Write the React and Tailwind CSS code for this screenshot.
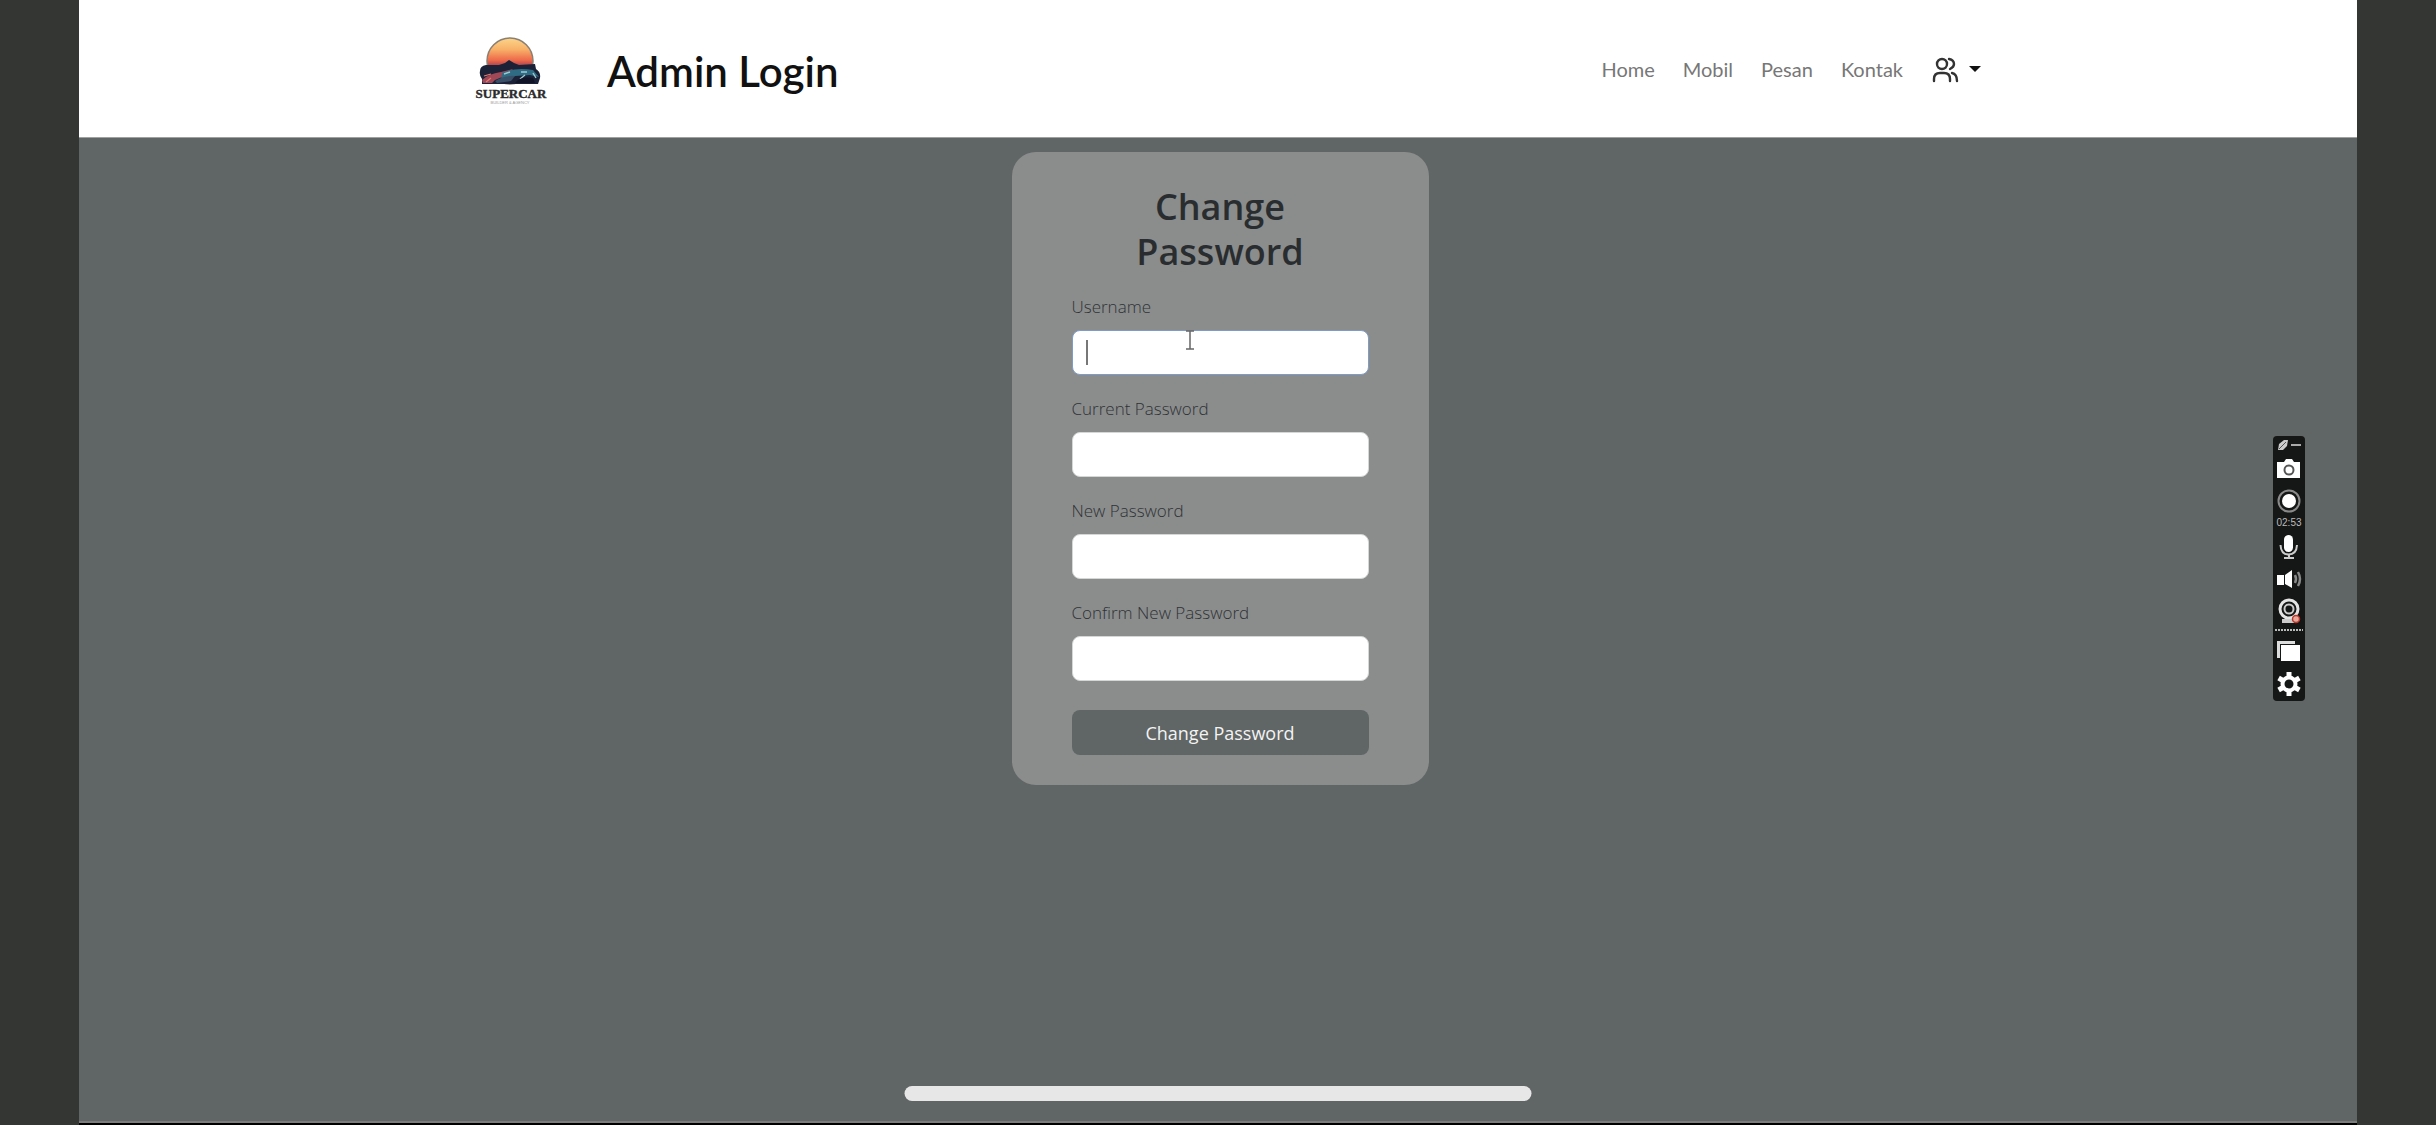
const fields = [
  { id: 'username', label: 'Username', type: 'text', active: true },
  { id: 'current-password', label: 'Current Password', type: 'password' },
  { id: 'new-password', label: 'New Password', type: 'password' },
  { id: 'confirm-password', label: 'Confirm New Password', type: 'password' },
];

const links = ['Home', 'Mobil', 'Pesan', 'Kontak'];

function Logo() {
  return (
    <svg className="h-[72px] w-[72px]" viewBox="0 0 72 72" role="img" aria-label="Supercar">
      <defs>
        <linearGradient id="sun" x1="0" y1="0" x2="0" y2="1">
          <stop offset="0" stopColor="#fbd58a" />
          <stop offset="0.25" stopColor="#f8b068" />
          <stop offset="0.48" stopColor="#ee6a4a" />
          <stop offset="0.62" stopColor="#a33d50" />
          <stop offset="0.8" stopColor="#221a33" />
        </linearGradient>
      </defs>
      <circle cx="35" cy="25" r="23" fill="url(#sun)" stroke="#8a7f72" strokeWidth="1.5" />
      <path d="M5 35 Q5 30 11 29 L24 29 L30 27 L34 24 L39 27 L44 29 L60 28 L61 33 Q66 36 65 42 L63 48 H7 V43 Q4 39 5 35Z" fill="#1b2137" />
      <path d="M7 44 Q13 38 26 36 L38 33 L32 39 L20 44 L17 47 H8Z" fill="#a04856" />
      <path d="M27 37 Q40 31 58 34 L64 41 L55 39 L40 40 L26 44Z" fill="#2f6c84" />
      <path d="M20 45 Q30 39 40 40 L36 45 L22 47Z" fill="#3a5069" />
      <path d="M29 38 L35 36 M46 36 L52 36 M58 37 L61 42 M45 43 L50 39" stroke="#9fc9cf" strokeWidth="1.4" fill="none" />
      <path d="M9 40 L16 38 M11 46 L16 42" stroke="#e07b73" strokeWidth="1.2" />
      <path d="M40 47 Q46 40 58 42 L60 47Z" fill="#101426" />
      <text x="36" y="62" textAnchor="middle" fontFamily="Liberation Serif, serif" fontWeight="700" fontSize="13" fill="#2b2b2b" stroke="#2b2b2b" strokeWidth="0.4">SUPERCAR</text>
      <text x="35" y="68" textAnchor="middle" fontFamily="Liberation Sans, sans-serif" fontSize="4" fill="#9a9a9a">BUILDER &amp; AGENCY</text>
    </svg>
  );
}

function Users() {
  return (
    <svg className="size-7" viewBox="0 0 28 28" fill="none" stroke="#333" strokeWidth="2.4" strokeLinecap="round" aria-hidden="true">
      <circle cx="11" cy="9" r="5" />
      <path d="M3 26 V24 Q3 18 9 18 H13 Q19 18 19 24 V26" />
      <path d="M18 4 Q23 5 23 9 Q23 12 19 14" />
      <path d="M21 18 Q26 19 26 26" />
    </svg>
  );
}

function Recorder() {
  return (
    <aside aria-label="Recorder" className="absolute top-[436px] right-[131px] w-8 rounded-sm bg-[#151616]">
      <svg className="block w-8" viewBox="0 0 32 265" fill="#fff">
        <path d="M5 14 L6 8 L11 4 H15 L14 10 L10 14Z" fill="#ccc" />
        <path d="M6 13 L13 6" stroke="#555" />
        <rect x="18" y="8" width="10" height="2" fill="#aaa" />
        <path d="M4 26 H11 L13 23 H19 L21 26 H27 V42 H4Z" />
        <circle cx="16" cy="34" r="4.500" fill="none" stroke="#555" strokeWidth="2" />
        <circle cx="16" cy="65" r="10.500" fill="none" stroke="#8a8a8a" strokeWidth="2" />
        <circle cx="16" cy="65" r="7" />
        <text x="16" y="90" textAnchor="middle" fontSize="10" fontFamily="Liberation Sans, sans-serif" fill="#bbb">02:53</text>
        <rect x="11" y="99" width="9" height="17" rx="4.500" />
        <path d="M7.500 109 Q8 118.500 15.500 118.500 Q23.500 118.500 24 109" fill="none" stroke="#ccc" strokeWidth="2" />
        <path d="M15 118 H17 V121 H21 V123 H11 V121 H15Z" fill="#ccc" />
        <path d="M4 139 H11 V149 H4Z M12 139 L19 134 V152 L12 148Z" />
        <path d="M22 139 Q24 143 22 147 M25 136 Q29 143 25 150" fill="none" stroke="#888" strokeWidth="2.500" />
        <circle cx="16" cy="173" r="9" fill="none" stroke="#e4e4e4" strokeWidth="3" />
        <circle cx="16" cy="173" r="4.500" fill="none" stroke="#ccc" strokeWidth="2" />
        <path d="M9 183 H21 V187 H9Z" fill="#ccc" />
        <circle cx="23" cy="183" r="3.500" fill="#e9a79c" stroke="#b8392c" strokeWidth="1.500" />
        <path d="M2 194 H30" stroke="#bbb" strokeWidth="2" strokeDasharray="2 1" />
        <path d="M4 205 H22 V208 H7 V222 H4Z" fill="#ddd" />
        <rect x="8" y="209" width="19" height="16" />
        <g transform="translate(16 248)">
          <circle r="6.500" fill="none" stroke="#fff" strokeWidth="4" />
          <path d="M-2.500 -12 H2.500 V-7 H-2.500Z M-2.500 7 H2.500 V12 H-2.500Z" />
          <path d="M-2.500 -12 H2.500 V-7 H-2.500Z M-2.500 7 H2.500 V12 H-2.500Z" transform="rotate(60)" />
          <path d="M-2.500 -12 H2.500 V-7 H-2.500Z M-2.500 7 H2.500 V12 H-2.500Z" transform="rotate(120)" />
        </g>
      </svg>
    </aside>
  );
}

export default function App() {
  return (
    <div className="relative flex min-h-screen flex-col bg-[#343634] px-[79px] font-['Open_Sans',sans-serif]">
      <header className="border-b border-[#a0a0a0] bg-white font-['Lato',sans-serif]">
        <div className="mx-auto flex h-[137px] max-w-[1526px] items-center justify-between">
          <div className="flex items-center gap-[60px] pt-1.5 pl-5">
            <Logo />
            <h1 className="text-[42px] font-semibold text-[#111]">Admin Login</h1>
          </div>
          <nav className="flex items-center gap-7 text-xl text-[#777]">
            {links.map((link) => (
              <a key={link} href="#">{link}</a>
            ))}
            <button type="button" aria-label="Account" className="flex items-center gap-2.5">
              <Users />
              <svg className="h-[6px] w-3" viewBox="0 0 12 6" aria-hidden="true">
                <path d="M0 0 H12 L6 6Z" fill="#111" />
              </svg>
            </button>
          </nav>
        </div>
      </header>

      <main className="flex-1 bg-[#606565] pt-3.5 pl-1">
        <form className="mx-auto w-full max-w-[417px] rounded-3xl bg-[#8b8d8d] px-[60px] pt-8 pb-[30px]">
          <h2 className="mx-auto mb-[18px] w-min text-center text-4xl leading-[45px] font-semibold text-[#2a2d30]">
            Change Password
          </h2>
          {fields.map(({ id, label, type, active }) => (
            <div key={id} className="mb-[19px]">
              <label htmlFor={id} className="mb-2 block text-[17px] leading-[30px] font-light text-[#2f3235]">{label}</label>
              <div className="relative">
                <input
                  id={id}
                  type={type}
                  className={
                    active
                      ? 'block h-[45px] w-full rounded-lg border border-[#7f9bc8] bg-white px-3.5 text-lg'
                      : 'block h-[45px] w-full rounded-lg border border-[#d5d6d6] bg-white px-3.5 text-lg'
                  }
                />
                {active && (
                  <>
                    <span className="absolute top-2.5 left-3.5 h-[25px] w-0.5 bg-[#777]" />
                    <svg className="absolute top-0 left-[113px] h-5 w-2.5" viewBox="0 0 10 20" fill="none" stroke="#666" strokeWidth="1.500" aria-hidden="true">
                      <path d="M1 1 H9 M5 1 V19 M1 19 H9" />
                    </svg>
                  </>
                )}
              </div>
            </div>
          ))}
          <button type="submit" className="mt-2.5 h-[45px] w-full rounded-lg bg-[#606565] text-lg text-[#f3f3f3]">
            Change Password
          </button>
        </form>
      </main>

      <div className="h-1 border-t-2 border-b-2 border-t-[#7c7c7c] border-b-black bg-[#606565]" />
      <Recorder />
      <div className="absolute bottom-6 left-1/2 h-[15px] w-[627px] -translate-x-1/2 rounded-full bg-[#e7e7e7]" />
    </div>
  );
}
